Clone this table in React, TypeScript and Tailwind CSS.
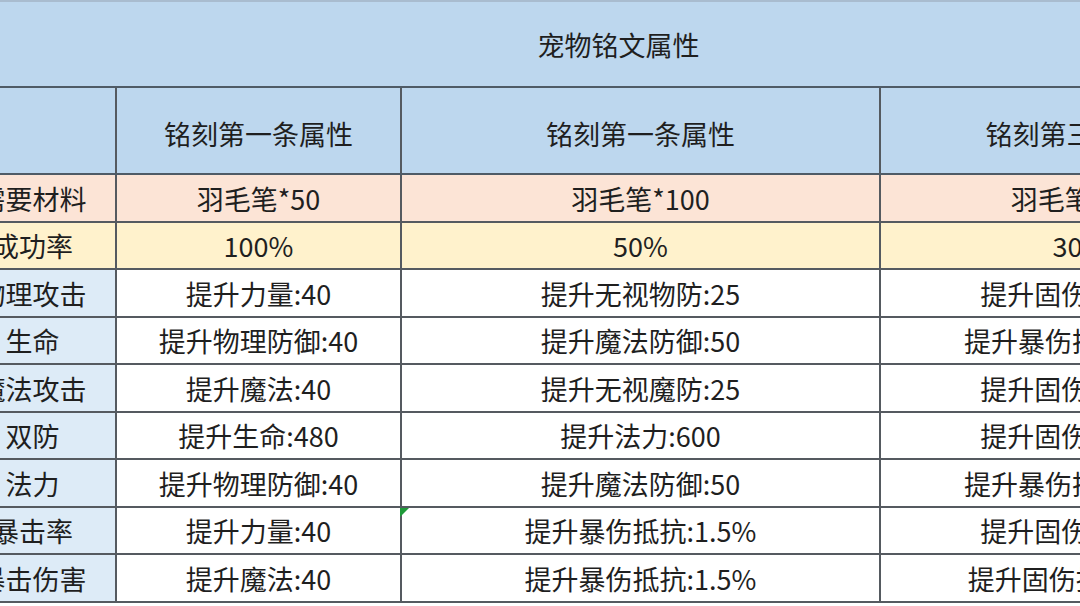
import React from "react";

type Row = { label: string; c2: string; c3: string; c4: string; bg: string; lbg: string; h: string; mark?: boolean };

const rows: Row[] = [
  { label: "需要材料", c2: "羽毛笔*50", c3: "羽毛笔*100", c4: "羽毛笔*150", bg: "bg-[#fce4d6]", lbg: "bg-[#fce4d6]", h: "h-[48px]" },
  { label: "成功率", c2: "100%", c3: "50%", c4: "30%", bg: "bg-[#fff2cc]", lbg: "bg-[#fff2cc]", h: "h-[47px]" },
  { label: "物理攻击", c2: "提升力量:40", c3: "提升无视物防:25", c4: "提升固伤抵抗:30", bg: "bg-white", lbg: "bg-[#ddebf7]", h: "h-[48px]" },
  { label: "生命", c2: "提升物理防御:40", c3: "提升魔法防御:50", c4: "提升暴伤抵抗:1.5%", bg: "bg-white", lbg: "bg-[#ddebf7]", h: "h-[47px]" },
  { label: "魔法攻击", c2: "提升魔法:40", c3: "提升无视魔防:25", c4: "提升固伤抵抗:30", bg: "bg-white", lbg: "bg-[#ddebf7]", h: "h-[48px]" },
  { label: "双防", c2: "提升生命:480", c3: "提升法力:600", c4: "提升固伤抵抗:30", bg: "bg-white", lbg: "bg-[#ddebf7]", h: "h-[47px]" },
  { label: "法力", c2: "提升物理防御:40", c3: "提升魔法防御:50", c4: "提升暴伤抵抗:1.5%", bg: "bg-white", lbg: "bg-[#ddebf7]", h: "h-[48px]" },
  { label: "暴击率", c2: "提升力量:40", c3: "提升暴伤抵抗:1.5%", c4: "提升固伤抵抗:30", bg: "bg-white", lbg: "bg-[#ddebf7]", h: "h-[47px]", mark: true },
  { label: "暴击伤害", c2: "提升魔法:40", c3: "提升暴伤抵抗:1.5%", c4: "提升固伤抵抗:25%", bg: "bg-white", lbg: "bg-[#ddebf7]", h: "h-[48px]" },
];

const cell = "flex items-center justify-center whitespace-nowrap shrink-0 border-r-2 border-[#555a60]";

export default function App() {
  return (
    <div
      className="w-[1080px] h-[606px] overflow-hidden bg-white text-[#1f1f1f] text-[27px] leading-none"
      style={{ fontFamily: '"Noto Sans CJK SC", "Noto Sans", sans-serif' }}
    >
      <div className="-ml-[50px] w-[1331px]">
        {/* title */}
        <div className="h-[88px] border-t-2 border-t-[#a9bccf] border-b-2 border-b-[#4f5b66] bg-[#bdd7ee] flex items-center justify-center pl-[6px]">
          宠物铭文属性
        </div>
        {/* header */}
        <div className="flex h-[87px] border-b-2 border-[#4f5b66] bg-[#bdd7ee]">
          <div className={`${cell} w-[167px] border-[#4f5b66]`}></div>
          <div className={`${cell} w-[285px] border-[#4f5b66] pt-[6px]`}>铭刻第一条属性</div>
          <div className={`${cell} w-[479px] border-[#4f5b66] pt-[6px]`}>铭刻第一条属性</div>
          <div className={`${cell} w-[400px] border-[#4f5b66] pt-[6px]`}>铭刻第三条属性</div>
        </div>
        {rows.map((r) => (
          <div key={r.label} className={`flex ${r.h} border-b-2 border-[#555a60] ${r.bg}`}>
            <div className={`${cell} w-[167px] ${r.lbg}`}>{r.label}</div>
            <div className={`${cell} w-[285px]`}>{r.c2}</div>
            <div className={`${cell} w-[479px] relative`}>
              {r.mark && (
                <svg className="absolute -left-[2px] top-0" width="9" height="9" viewBox="0 0 9 9">
                  <polygon points="0,0 9,0 0,9" fill="#1f9a3a" />
                </svg>
              )}
              {r.c3}
            </div>
            <div className={`${cell} w-[400px]`}>{r.c4}</div>
          </div>
        ))}
      </div>
    </div>
  );
}
